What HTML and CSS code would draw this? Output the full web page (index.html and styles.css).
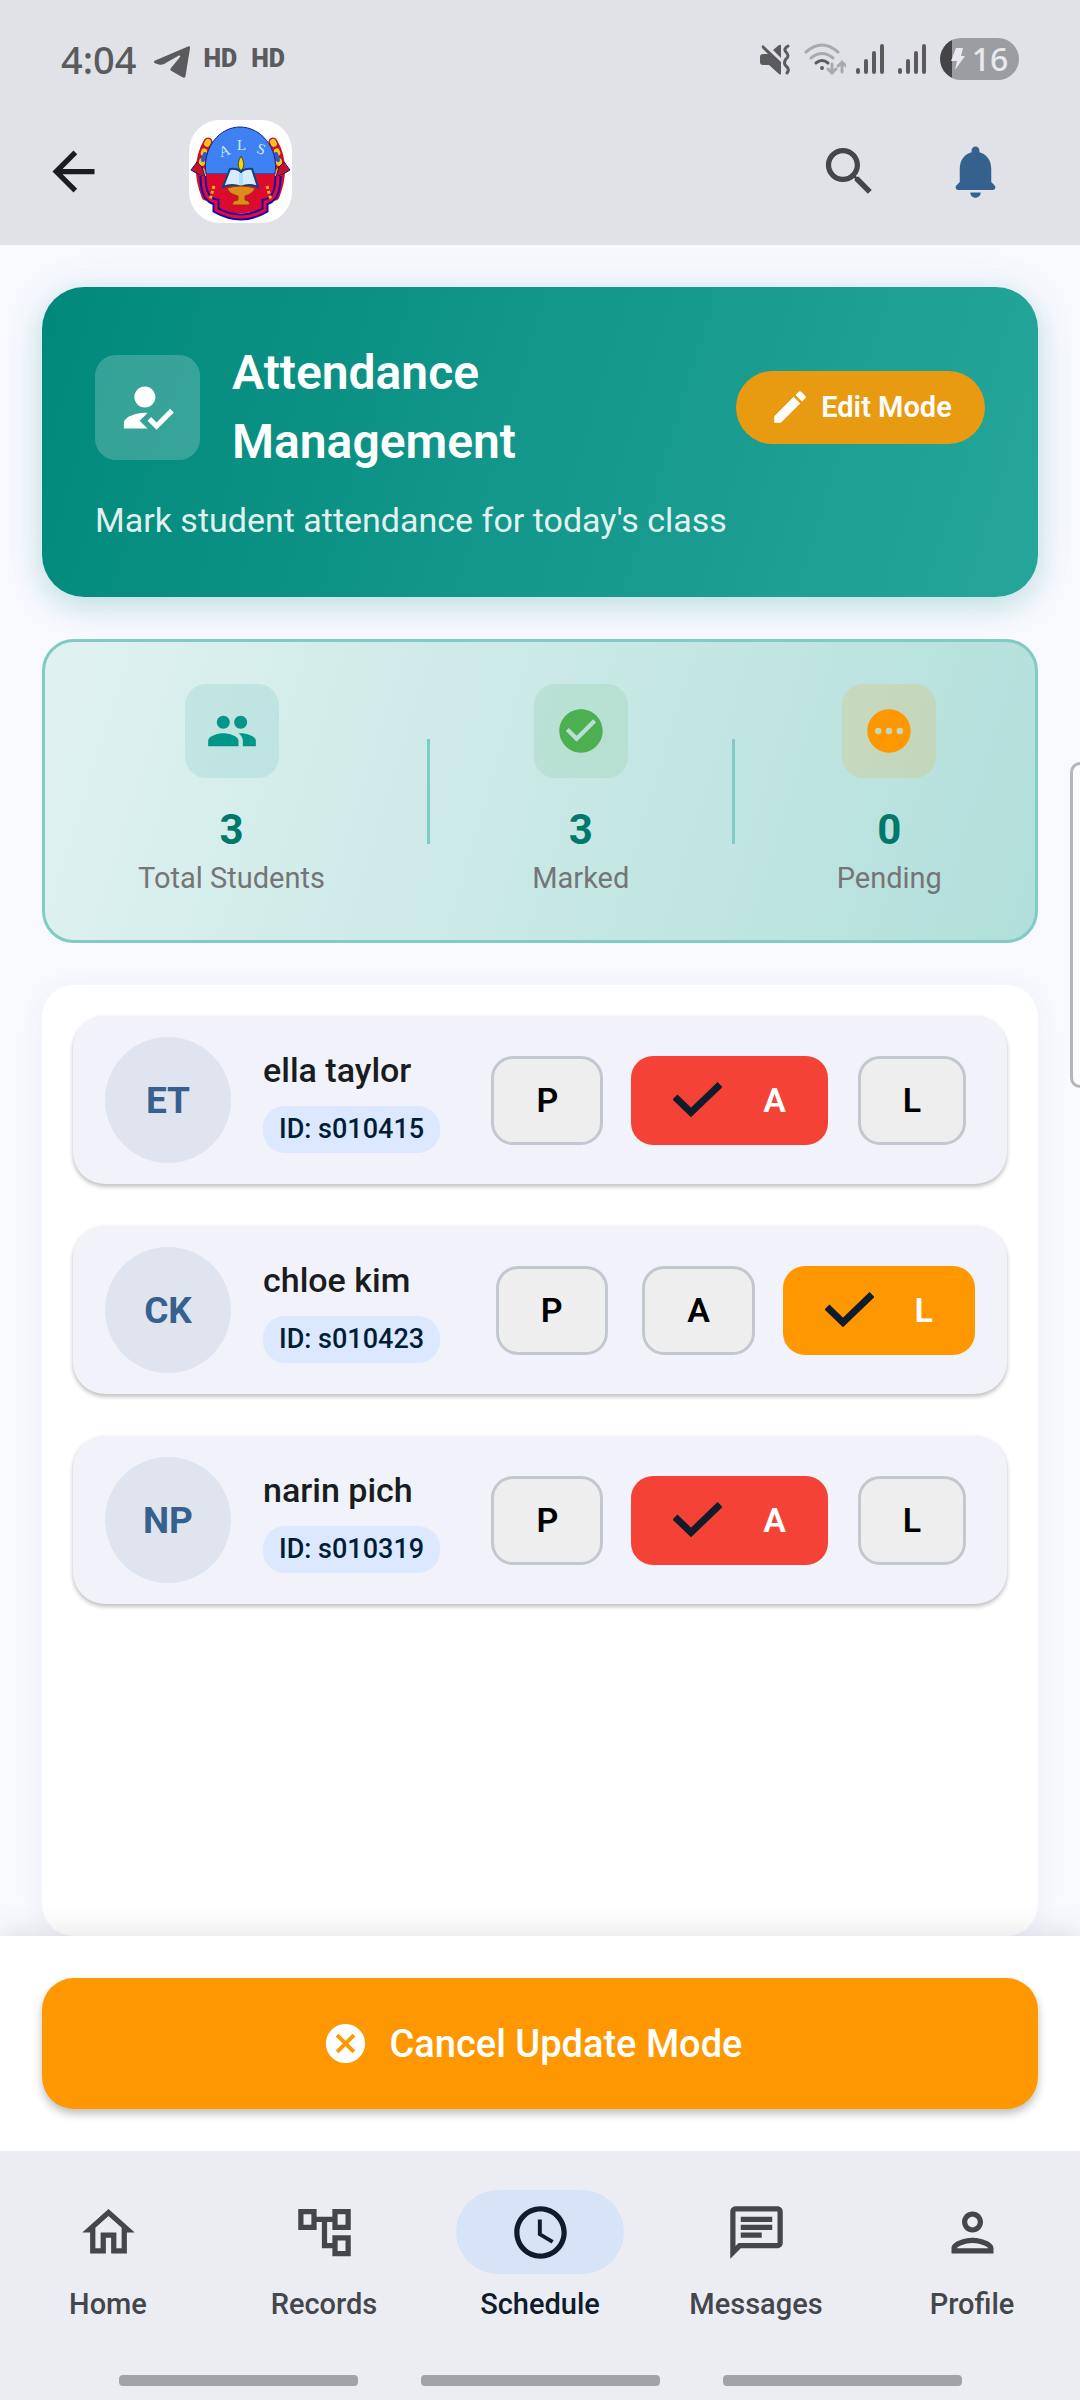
FILE: index.html
```html
<!DOCTYPE html>
<html lang="en">
<head>
<meta charset="utf-8">
<meta name="viewport" content="width=device-width, initial-scale=1">
<title>Attendance Management</title>
<link rel="stylesheet" href="styles.css">
</head>
<body>
<header class="top">
  <div class="status">
    <span class="time">4:04</span>
    <svg class="telegram" viewBox="0 0 36 32" width="36" height="32"><path fill="#5b5b5d" d="M34 .5c1.500-.600 2.300.200 2 1.800L31.500 30c-.300 1.800-1.500 2.200-3 1.300L17.500 25c-1.500-1-1.400-2-.300-3.200L26 11c.700-1-.200-2-1.500-1.200L10 18c-2 1-4 .900-6 .200l-3-1c-1.500-.700-1.300-2 .2-2.700z"/></svg>
    <span class="hd">HD</span>
    <span class="hd">HD</span>
    <div class="signals">
      <svg viewBox="0 0 30 31" width="30" height="31"><g fill="#5b5b5d"><path d="M0 13q0-3 3-3h5L2 4q-1-2 1-3l18 17v12q-1 1-2 0L9 21H3q-3 0-3-3zM13 6l6-5q2-1 2 1v12z"/></g><path d="M28 2q-5 3-2 6 4 4 0 7-3 4 0 7 4 3 1 7" fill="none" stroke="#5b5b5d" stroke-width="3" stroke-linecap="round"/></svg>
      <svg class="wifi" viewBox="0 0 42 32" width="42" height="32"><g fill="none" stroke-width="3" stroke-linecap="round"><path d="M2 9q16-14 32 0M7 15q11-9 22 0M28 21v9m-4-4 4 4 4-4M38 29v-10m-4 4 4-4 4 4" stroke="#a9aaaf"/><path d="M12 20q6-5 12 0" stroke="#5b5b5d"/></g><circle cx="18" cy="25" r="2" fill="#5b5b5d"/></svg>
      <svg viewBox="0 0 28 30" width="28" height="30"><path d="M2 26v2M10 17v11M18 9v19M26 2v26" stroke="#5b5b5d" stroke-width="4" stroke-linecap="round"/></svg>
      <svg viewBox="0 0 28 30" width="28" height="30"><path d="M2 26v2M10 17v11M18 9v19M26 2v26" stroke="#5b5b5d" stroke-width="4" stroke-linecap="round"/></svg>
      <span class="battery"><svg viewBox="0 0 14 24" width="14" height="24"><path fill="#e8e9ee" d="M5 1h7l-2 8h4L4 23l2-9H0z"/></svg>16</span>
    </div>
  </div>
  <div class="appbar">
    <button class="icon-btn" aria-label="Back"><svg viewBox="0 0 24 24" fill="#191c20"><path d="M20 11H7.830l5.590-5.590L12 4l-8 8 8 8 1.410-1.410L7.830 13H20z"/></svg></button>
    <svg class="logo" viewBox="0 0 103 103" role="img" aria-label="School emblem">
      <rect width="103" height="103" rx="31" fill="#fff"/>
      <g fill="none" stroke-linecap="round">
        <path d="M19 22Q5 46 17 76M84 22Q98 46 86 76" stroke="#c8102a" stroke-width="9"/>
        <path d="M19 22Q7 45 18 72M84 22Q96 45 85 72" stroke="#f7c51c" stroke-width="6" stroke-dasharray="2 8"/>
        <path d="M16 34l-2 6M87 34l2 6" stroke="#2a5bd0" stroke-width="4"/>
      </g>
      <path fill="#c8102a" stroke="#1b1470" d="M2 50l6-8 5 5 3 10-9-4zM101 50l-6-8-5 5-3 10 9-4z"/>
      <path fill="#3f80f2" stroke="#14257a" d="M17 54C13 27 31 7 51 7s39 20 35 47z"/>
      <path fill="#dc0a2c" d="M17 54h69q2 20-11 34-24 11-48 0Q15 74 17 54z"/>
      <path d="M14 56q0 24 13 26v8q25 14 49 0v-8q13-2 13-26" fill="none" stroke="#2200b0" stroke-width="7"/>
      <path d="M14 56q0 24 13 26v8q25 14 49 0v-8q13-2 13-26" fill="none" stroke="#e2122d" stroke-width="3"/>
      <path d="M25 66l-4 14M78 66l4 14" stroke="#f7b51c" stroke-width="3" stroke-dasharray="3 2"/>
      <g fill="#c9ecff" font-family="Liberation Serif, serif" font-size="15"><text x="30" y="36" transform="rotate(-18 35 31)">A</text><text x="48" y="30">L</text><text x="68" y="34" transform="rotate(18 72 29)">S</text></g>
      <path fill="#f8d21a" stroke="#3d5410" d="M52 36q5 8 1 14h-2q-4-6 1-14z"/>
      <path fill="#d9ecff" stroke="#123f86" stroke-width="2" d="M41 49q7-1 11 3 4-4 11-3l6 18q-9-4-17 0-9-4-18 0z"/>
      <path d="M52 53v12" stroke="#a5e4fb" stroke-width="4"/>
      <path fill="#e08a17" stroke="#8e3a10" d="M38 68q14-4 28 0-2 6-10 8v4q6 1 4 5H44q-2-4 5-5v-4q-9-2-11-8z"/>
    </svg>
    <div class="actions">
      <button class="icon-btn" aria-label="Search"><svg viewBox="0 0 24 24" fill="#43474b"><path d="M15.500 14h-.790l-.280-.270C15.410 12.590 16 11.110 16 9.500 16 5.910 13.090 3 9.500 3S3 5.910 3 9.500 5.910 16 9.500 16c1.610 0 3.090-.590 4.230-1.570l.270.280v.790l5 4.990L20.490 19l-4.990-5zm-6 0C7.010 14 5 11.990 5 9.500S7.010 5 9.500 5 14 7.010 14 9.500 11.990 14 9.500 14z"/></svg></button>
      <button class="icon-btn" aria-label="Notifications"><svg viewBox="0 0 24 24" fill="#36618e"><path d="M12 22c1.100 0 2-.900 2-2h-4c0 1.100.890 2 2 2zm6-6v-5c0-3.070-1.640-5.640-4.500-6.320V4c0-.830-.670-1.500-1.500-1.500s-1.500.670-1.500 1.500v.680C7.630 5.360 6 7.920 6 11v5l-1.290 1.290c-.630.630-.190 1.710.700 1.710h13.170c.890 0 1.340-1.080.710-1.710L18 16z"/></svg></button>
    </div>
  </div>
</header>

<main class="content">
  <section class="hero">
    <div class="hero-row">
      <span class="hero-icon"><svg viewBox="0 0 24 24" fill="#fff"><path d="M9 17l3-2.940c-.390-.040-.680-.060-1-.060-2.670 0-8 1.340-8 4v2h9l-3-3zm2-5c2.210 0 4-1.790 4-4s-1.790-4-4-4-4 1.790-4 4 1.790 4 4 4zm4.470 8.500L12 17l1.400-1.410 2.070 2.080 5.130-5.170 1.400 1.410z"/></svg></span>
      <h1 class="title">Attendance Management</h1>
      <button class="edit"><svg viewBox="0 0 24 24" width="42" height="42" fill="#fff"><path d="M3 17.250V21h3.750L17.810 9.940l-3.750-3.750L3 17.250zM20.710 7.040c.390-.390.390-1.020 0-1.410l-2.340-2.340c-.390-.390-1.020-.390-1.410 0l-1.830 1.830 3.750 3.750 1.830-1.830z"/></svg>Edit Mode</button>
    </div>
    <p class="subtitle">Mark student attendance for today's class</p>
  </section>

  <section class="stats">
    <div class="stat">
      <span class="stat-icon teal"><svg viewBox="0 0 24 24" fill="#009688"><path d="M16 11c1.660 0 2.990-1.340 2.990-3S17.660 5 16 5s-3 1.340-3 3 1.340 3 3 3zm-8 0c1.660 0 2.990-1.340 2.990-3S9.660 5 8 5 5 6.340 5 8s1.340 3 3 3zm0 2c-2.330 0-7 1.170-7 3.500V19h14v-2.500c0-2.330-4.670-3.500-7-3.500zm8 0c-.290 0-.620.020-.970.050 1.160.840 1.970 1.970 1.970 3.450V19h6v-2.500c0-2.330-4.670-3.500-7-3.500z"/></svg></span>
      <span class="count">3</span><span class="label">Total Students</span>
    </div>
    <span class="rule"></span>
    <div class="stat">
      <span class="stat-icon green"><svg viewBox="0 0 24 24" fill="#4caf50"><path d="M12 2C6.480 2 2 6.480 2 12s4.480 10 10 10 10-4.480 10-10S17.520 2 12 2zm-2 15l-5-5 1.410-1.410L10 14.170l7.590-7.590L19 8l-9 9z"/></svg></span>
      <span class="count">3</span><span class="label">Marked</span>
    </div>
    <span class="rule"></span>
    <div class="stat">
      <span class="stat-icon amber"><svg viewBox="0 0 24 24" fill="#ff9800"><path d="M12 2C6.480 2 2 6.480 2 12s4.480 10 10 10 10-4.480 10-10S17.520 2 12 2zM7 13.500a1.500 1.500 0 1 1 0-3 1.500 1.500 0 0 1 0 3zm5 0a1.500 1.500 0 1 1 0-3 1.500 1.500 0 0 1 0 3zm5 0a1.500 1.500 0 1 1 0-3 1.500 1.500 0 0 1 0 3z"/></svg></span>
      <span class="count">0</span><span class="label">Pending</span>
    </div>
  </section>

  <ul class="list">
    <li class="student">
      <span class="avatar">ET</span>
      <div class="who"><span class="name">ella taylor</span><span class="sid">ID: s010415</span></div>
      <div class="marks">
        <span class="slot"><button class="mark" aria-pressed="false">P</button></span>
        <span class="slot"><button class="mark absent" aria-pressed="true"><svg viewBox="0 0 49 36" width="49" height="36"><path d="M2 15l16 15.500L47 2.500"/></svg>A</button></span>
        <span class="slot"><button class="mark" aria-pressed="false">L</button></span>
      </div>
    </li>
    <li class="student">
      <span class="avatar">CK</span>
      <div class="who"><span class="name">chloe kim</span><span class="sid">ID: s010423</span></div>
      <div class="marks">
        <span class="slot"><button class="mark" aria-pressed="false">P</button></span>
        <span class="slot"><button class="mark" aria-pressed="false">A</button></span>
        <span class="slot"><button class="mark late" aria-pressed="true"><svg viewBox="0 0 49 36" width="49" height="36"><path d="M2 15l16 15.500L47 2.500"/></svg>L</button></span>
      </div>
    </li>
    <li class="student">
      <span class="avatar">NP</span>
      <div class="who"><span class="name">narin pich</span><span class="sid">ID: s010319</span></div>
      <div class="marks">
        <span class="slot"><button class="mark" aria-pressed="false">P</button></span>
        <span class="slot"><button class="mark absent" aria-pressed="true"><svg viewBox="0 0 49 36" width="49" height="36"><path d="M2 15l16 15.500L47 2.500"/></svg>A</button></span>
        <span class="slot"><button class="mark" aria-pressed="false">L</button></span>
      </div>
    </li>
  </ul>
</main>

<div class="footer-bar">
  <button class="cancel"><svg viewBox="0 0 24 24" width="47" height="47" fill="#fff"><path d="M12 2C6.470 2 2 6.470 2 12s4.470 10 10 10 10-4.470 10-10S17.530 2 12 2zm5 13.590L15.590 17 12 13.410 8.410 17 7 15.590 10.590 12 7 8.410 8.410 7 12 10.590 15.590 7 17 8.410 13.410 12 17 15.590z"/></svg>Cancel Update Mode</button>
</div>

<nav class="nav">
  <div class="tabs">
    <a class="tab" href="#home"><span class="pill"><svg viewBox="0 0 24 24"><path d="M12 5.690l5 4.500V18h-2v-6H9v6H7v-7.810l5-4.500M12 3L2 12h3v8h6v-6h2v6h6v-8h3L12 3z"/></svg></span>Home</a>
    <a class="tab" href="#records"><span class="pill"><svg viewBox="0 0 24 24"><path d="M22 11V3h-7v3H9V3H2v8h7V8h2v10h4v3h7v-8h-7v3h-2V8h2v3h7zM7 9H4V5h3v4zm10 6h3v4h-3v-4zm0-10h3v4h-3V5z"/></svg></span>Records</a>
    <a class="tab active" href="#schedule" aria-current="page"><span class="pill"><svg viewBox="0 0 24 24"><path d="M11.990 2C6.470 2 2 6.480 2 12s4.470 10 9.990 10C17.520 22 22 17.520 22 12S17.520 2 11.990 2zM12 20c-4.420 0-8-3.580-8-8s3.580-8 8-8 8 3.580 8 8-3.580 8-8 8zm.500-13H11v6l5.250 3.150.750-1.230-4.500-2.670z"/></svg></span>Schedule</a>
    <a class="tab" href="#messages"><span class="pill"><svg viewBox="0 0 24 24"><path d="M4 4h16v12H5.170L4 17.170V4m0-2c-1.100 0-1.990.900-1.990 2L2 22l4-4h14c1.100 0 2-.900 2-2V4c0-1.100-.900-2-2-2H4zm2 10h8v2H6v-2zm0-3h12v2H6V9zm0-3h12v2H6V6z"/></svg></span>Messages</a>
    <a class="tab" href="#profile"><span class="pill"><svg viewBox="0 0 24 24"><path d="M12 6c1.100 0 2 .900 2 2s-.900 2-2 2-2-.900-2-2 .900-2 2-2m0 10c2.700 0 5.800 1.290 6 2H6c.230-.720 3.310-2 6-2m0-12C9.790 4 8 5.790 8 8s1.790 4 4 4 4-1.790 4-4-1.790-4-4-4zm0 10c-2.670 0-8 1.340-8 4v2h16v-2c0-2.660-5.330-4-8-4z"/></svg></span>Profile</a>
  </div>
  <div class="gestures"><span></span><span></span><span></span></div>
</nav>
<span class="edge-handle"></span>
</body>
</html>
```
FILE: styles.css
```css
* { box-sizing: border-box; }

body {
  margin: 0;
  min-height: 100vh;
  display: flex;
  flex-direction: column;
  position: relative;
  background: #f8f9ff;
  color: #191c20;
  font-family: Roboto, "Liberation Sans", sans-serif;
}

button {
  font: inherit;
  border: 0;
  padding: 0;
  cursor: pointer;
}

svg { display: block; flex: none; }

/* Status and app bars */
.top { background: #e1e2e8; }

.status {
  display: flex;
  align-items: center;
  height: 98px;
  padding: 20px 61px 0 61px;
  color: #5b5b5d;
}

.time {
  font: 500 38px/40px "Noto Sans", sans-serif;
  margin-right: 17px;
}

.telegram { margin-right: 14px; margin-top: 6px; }

.hd {
  font: 900 25px/30px Roboto, sans-serif;
  margin-right: 14px;
}

.signals {
  display: flex;
  align-items: center;
  gap: 14px;
  margin-left: auto;
}

.wifi { margin-right: -4px; }

.battery {
  display: flex;
  align-items: center;
  justify-content: center;
  gap: 7px;
  width: 79px;
  height: 42px;
  border-radius: 21px;
  background: linear-gradient(90deg, #444446 12px, #9c9da1 12px);
  color: #e8e9ee;
  font: 500 32px/42px "Noto Sans", sans-serif;
}

.appbar {
  display: flex;
  align-items: center;
  height: 147px;
  padding: 0 73px 0 42px;
}

.icon-btn { width: 63px; height: 63px; background: none; }

.logo { width: 103px; height: 103px; margin-left: 84px; }

.actions { display: flex; gap: 63px; margin-left: auto; }

/* Main column */
.content {
  flex: 1;
  display: flex;
  flex-direction: column;
  gap: 42px;
  padding: 42px 42px 0;
}

.hero {
  padding: 51px 53px 53px;
  border-radius: 42px;
  background: linear-gradient(107deg, #00897b, #26a69a);
  box-shadow: 0 10px 31px rgba(0, 150, 136, 0.2), 0 0 42px rgba(54, 97, 142, 0.08);
}

.hero-row { display: flex; align-items: center; }

.hero-icon {
  display: grid;
  place-items: center;
  width: 105px;
  height: 105px;
  margin-right: 32px;
  border-radius: 21px;
  background: rgba(255, 255, 255, 0.2);
}

.hero-icon svg { width: 63px; }

.title {
  flex: 1;
  margin: 0;
  color: #fff;
  font-size: 48px;
  font-weight: 600;
  line-height: 69px;
}

.edit {
  display: flex;
  align-items: center;
  justify-content: center;
  gap: 10px;
  width: 249px;
  height: 73px;
  border-radius: 37px;
  background: #e89a10;
  color: #fff;
  font-size: 29px;
  font-weight: 600;
}

.subtitle {
  margin: 21px 0 0;
  color: rgba(255, 255, 255, 0.9);
  font-size: 34px;
  line-height: 47px;
}

/* Summary */
.stats {
  display: flex;
  align-items: center;
  justify-content: space-around;
  padding: 42px;
  border: 3px solid #80cbc4;
  border-radius: 32px;
  background: linear-gradient(107deg, #e0f2f1, #b2dfdb);
}

.stat { display: flex; flex-direction: column; align-items: center; }

.stat-icon {
  display: grid;
  place-items: center;
  width: 94px;
  height: 94px;
  margin-bottom: 23px;
  border-radius: 21px;
}

.stat-icon svg { width: 52px; }
.teal { background: rgba(0, 150, 136, 0.1); }
.green { background: rgba(76, 175, 80, 0.12); }
.amber { background: rgba(255, 152, 0, 0.15); }

.count {
  color: #00796b;
  font-size: 42px;
  font-weight: 700;
  line-height: 58px;
}

.label { color: #757575; font-size: 29px; line-height: 39px; }

.rule { width: 3px; height: 105px; background: #80cbc4; }

/* Students */
.list {
  flex: 1;
  display: flex;
  flex-direction: column;
  gap: 42px;
  margin: 0;
  padding: 31px;
  list-style: none;
  border-radius: 32px;
  background: #fff;
  box-shadow: 0 5px 26px rgba(54, 60, 120, 0.06);
}

.student {
  display: flex;
  align-items: center;
  gap: 32px;
  padding: 21px 32px;
  border-radius: 32px;
  background: #f1f2fa;
  box-shadow: 0 3px 4px rgba(0, 0, 0, 0.2), 0 1px 5px rgba(0, 0, 0, 0.08);
}

.avatar {
  display: grid;
  place-items: center;
  width: 126px;
  height: 126px;
  border-radius: 50%;
  background: #dfe4ee;
  color: #36618e;
  font-size: 37px;
  font-weight: 700;
}

.who { display: flex; flex-direction: column; align-items: flex-start; gap: 13px; }

.name { font-size: 34px; font-weight: 500; line-height: 46px; }

.sid {
  padding: 0 16px;
  border-radius: 22px;
  background: #dbe8ff;
  color: #001d36;
  font-size: 27px;
  font-weight: 500;
  line-height: 47px;
}

.marks { display: flex; gap: 21px; margin-left: auto; }

.slot { display: flex; justify-content: center; min-width: 126px; }

.mark {
  display: flex;
  align-items: center;
  gap: 41px;
  height: 89px;
  padding: 0 42px;
  border: 3px solid #c3c7cf;
  border-radius: 22px;
  background: #eee;
  color: #000;
  font-size: 34px;
  font-weight: 600;
}

.mark svg { fill: none; stroke: #101c2b; stroke-width: 7px; }
.absent, .late { border: 0; color: #fff; }
.absent { background: #f44336; }
.late { background: #ff9800; }

/* Bottom action */
.footer-bar {
  position: relative;
  padding: 42px;
  background: #fff;
  box-shadow: 0 -5px 26px rgba(0, 0, 0, 0.1);
}

.cancel {
  display: flex;
  align-items: center;
  justify-content: center;
  gap: 21px;
  width: 100%;
  height: 131px;
  padding-right: 16px;
  border-radius: 32px;
  background: #ff9800;
  color: #fff;
  font-size: 38px;
  font-weight: 500;
  box-shadow: 0 5px 8px rgba(0, 0, 0, 0.25);
}

/* Navigation */
.nav { position: relative; padding: 39px 0 14px; background: #ecedf3; }

.tabs { display: grid; grid-template-columns: repeat(5, 1fr); }

.tab {
  display: flex;
  flex-direction: column;
  align-items: center;
  gap: 11px;
  color: #43474b;
  font-size: 29px;
  font-weight: 500;
  line-height: 38px;
  text-decoration: none;
}

.pill {
  display: grid;
  place-items: center;
  width: 168px;
  height: 84px;
  border-radius: 42px;
}

.pill svg { width: 63px; fill: currentColor; }
.active { color: #101c2b; }
.active .pill { background: #d7e3f7; }

.gestures { display: flex; justify-content: center; gap: 63px; margin-top: 52px; }
.gestures span { width: 239px; height: 11px; border-radius: 4px; background: #a2a3a8; }

/* System edge panel, floats over the page */
.edge-handle {
  position: absolute;
  top: 762px;
  right: 0;
  width: 10px;
  height: 326px;
  border: 3px solid #b4b5b9;
  border-right: 0;
  border-radius: 10px 0 0 10px;
  background: #fbfbfe;
}
```
